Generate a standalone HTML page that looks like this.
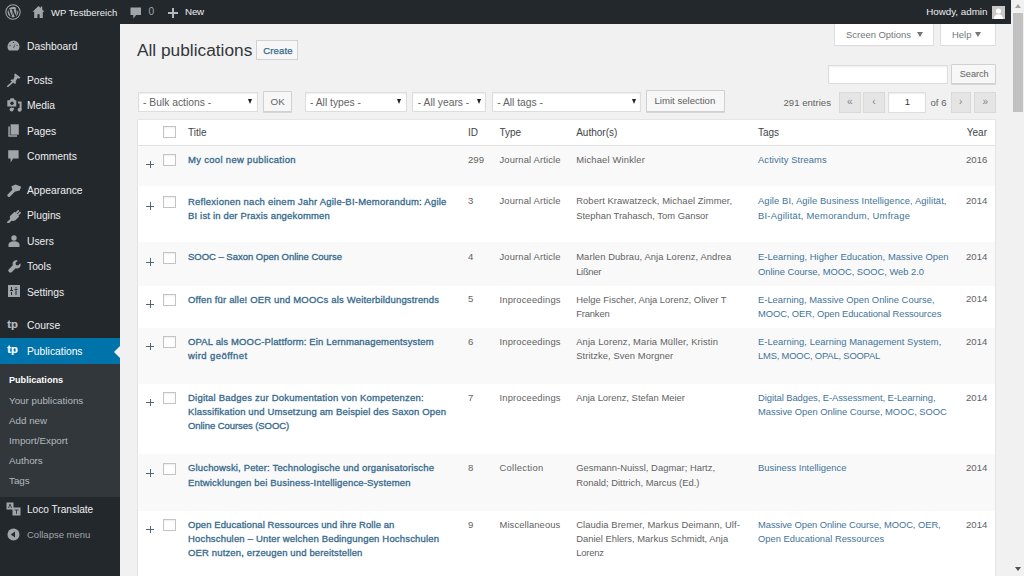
<!DOCTYPE html>
<html><head><meta charset="utf-8"><title>All publications</title>
<style>
html,body{margin:0;padding:0;width:1024px;height:576px;overflow:hidden;background:#f1f1f1}
body{position:relative;font-family:"Liberation Sans",sans-serif}
.r{position:absolute;display:block}
.t{position:absolute;white-space:nowrap}
</style></head><body>
<div class="r" style="left:0px;top:0px;width:1024px;height:576px;background:#f1f1f1"></div>
<div class="r" style="left:0px;top:24px;width:120px;height:552px;background:#23282d"></div>
<div class="r" style="left:0px;top:363.5px;width:120px;height:133px;background:#32373c"></div>
<div class="r" style="left:0px;top:337.5px;width:120px;height:26px;background:#0073aa"></div>
<div class="r" style="left:114px;top:346px;width:0;height:0;border-top:6px solid transparent;border-bottom:6px solid transparent;border-right:6px solid #f1f1f1"></div>
<div class="r" style="left:0px;top:0px;width:1011px;height:24px;background:#23282d"></div>
<div class="r" style="left:1012px;top:0px;width:12px;height:576px;background:#f1f1f1"></div>
<div class="r" style="left:1013px;top:13px;width:10px;height:99px;background:#c1c1c1"></div>
<div class="r" style="left:1015px;top:4px;width:0;height:0;border-left:3px solid transparent;border-right:3px solid transparent;border-bottom:4px solid #a3a3a3"></div>
<div class="r" style="left:1015px;top:567px;width:0;height:0;border-left:3px solid transparent;border-right:3px solid transparent;border-top:4px solid #505050"></div>
<svg class="r" style="left:4.5px;top:3.7px" width="16" height="16" viewBox="0 0 20 20"><circle cx="10" cy="10" r="9" fill="none" stroke="#a0a5aa" stroke-width="1.3"/><path d="M3.3 10a6.7 6.7 0 0 0 3.8 6L3.9 7.3A6.6 6.6 0 0 0 3.3 10zm11.1-.3c0-.8-.3-1.4-.5-1.8-.3-.5-.6-.9-.6-1.4 0-.6.4-1.1 1-1.1h.1A6.7 6.7 0 0 0 4.3 6.5h.4c.7 0 1.8-.1 1.8-.1.4 0 .4.5 0 .6 0 0-.4 0-.8.1l2.4 7.2 1.5-4.4-1-2.8c-.4 0-.7-.1-.7-.1-.4 0-.3-.6 0-.6 0 0 1.1.1 1.8.1s1.8-.1 1.8-.1c.4 0 .4.5 0 .6 0 0-.4 0-.8.1l2.4 7.1.7-2.2c.3-.9.5-1.6.5-2.1zm-4.3.9l-2 5.8a6.7 6.7 0 0 0 4.1-.1l-.1-.1-2-5.6zm5.7-3.8l.1.7c0 .7-.1 1.4-.5 2.4l-2 5.9a6.7 6.7 0 0 0 2.4-9z" fill="#a0a5aa"/></svg>
<svg class="r" style="left:32px;top:5px" width="13" height="14" viewBox="0 0 13 14"><path d="M6.5 1L0.5 6.8h1.7V13h3.2V9.2h2.2V13h3.2V6.8h1.7L10.2 4.4V1.6H8.8v1.5z" fill="#a0a5aa"/></svg>
<div class="t" style="left:51.00px;top:5.75px;font-size:9.5px;line-height:14.3px;color:#eee;">WP Testbereich</div>
<svg class="r" style="left:130px;top:7px" width="12" height="12" viewBox="0 0 12 12"><path d="M0.5 0.5h10.5v7.5H6.2L3.3 11.5V8H0.5z" fill="#a0a5aa"/></svg>
<div class="t" style="left:148.60px;top:5.31px;font-size:10.2px;line-height:14.3px;color:#a0a5aa;">0</div>
<div class="r" style="left:167.8px;top:11.6px;width:10.2px;height:2.2px;background:#b4b9be"></div>
<div class="r" style="left:171.8px;top:7.8px;width:2.2px;height:9.8px;background:#b4b9be"></div>
<div class="t" style="left:185.00px;top:5.45px;font-size:9.8px;line-height:14.3px;color:#eee;letter-spacing:-0.2px;">New</div>
<div class="t" style="right:36.50px;top:5.45px;font-size:9.8px;line-height:14.3px;color:#eee;text-align:right;">Howdy, admin</div>
<div class="r" style="left:992px;top:5.5px;width:13px;height:13px;background:#c7c7c7"></div>
<svg class="r" style="left:992px;top:5.5px" width="13" height="13" viewBox="0 0 13 13"><circle cx="6.5" cy="5" r="2.6" fill="#fff"/><path d="M1.8 13c0-3.2 2.2-4.8 4.7-4.8s4.7 1.6 4.7 4.8z" fill="#fff"/></svg>
<div class="t" style="left:27.00px;top:39.68px;font-size:10.3px;line-height:14.3px;color:#eee;">Dashboard</div>
<div class="t" style="left:27.00px;top:73.58px;font-size:10.3px;line-height:14.3px;color:#eee;">Posts</div>
<div class="t" style="left:27.00px;top:99.28px;font-size:10.3px;line-height:14.3px;color:#eee;">Media</div>
<div class="t" style="left:27.00px;top:124.88px;font-size:10.3px;line-height:14.3px;color:#eee;">Pages</div>
<div class="t" style="left:27.00px;top:150.48px;font-size:10.3px;line-height:14.3px;color:#eee;">Comments</div>
<div class="t" style="left:27.00px;top:183.58px;font-size:10.3px;line-height:14.3px;color:#eee;">Appearance</div>
<div class="t" style="left:27.00px;top:209.28px;font-size:10.3px;line-height:14.3px;color:#eee;">Plugins</div>
<div class="t" style="left:27.00px;top:234.88px;font-size:10.3px;line-height:14.3px;color:#eee;">Users</div>
<div class="t" style="left:27.00px;top:260.28px;font-size:10.3px;line-height:14.3px;color:#eee;">Tools</div>
<div class="t" style="left:27.00px;top:286.08px;font-size:10.3px;line-height:14.3px;color:#eee;">Settings</div>
<div class="t" style="left:27.00px;top:319.48px;font-size:10.3px;line-height:14.3px;color:#eee;">Course</div>
<div class="t" style="left:27.00px;top:344.78px;font-size:10.3px;line-height:14.3px;color:#fff;">Publications</div>
<div class="t" style="left:9.00px;top:373.09px;font-size:9.1px;line-height:14.3px;color:#fff;font-weight:bold;">Publications</div>
<div class="t" style="left:9.00px;top:393.75px;font-size:9.8px;line-height:14.3px;color:#b4b9be;">Your publications</div>
<div class="t" style="left:9.00px;top:413.95px;font-size:9.8px;line-height:14.3px;color:#b4b9be;">Add new</div>
<div class="t" style="left:9.00px;top:433.75px;font-size:9.8px;line-height:14.3px;color:#b4b9be;">Import/Export</div>
<div class="t" style="left:9.00px;top:454.25px;font-size:9.8px;line-height:14.3px;color:#b4b9be;">Authors</div>
<div class="t" style="left:9.00px;top:473.75px;font-size:9.8px;line-height:14.3px;color:#b4b9be;">Tags</div>
<div class="t" style="left:27.00px;top:502.55px;font-size:10.1px;line-height:14.3px;color:#eee;">Loco Translate</div>
<div class="t" style="left:27.00px;top:528.45px;font-size:9.5px;line-height:14.3px;color:#a0a5aa;">Collapse menu</div>
<svg class="r" style="left:7px;top:40px" width="13" height="11" viewBox="0 0 13 11"><path d="M6.5 0.5A6 6 0 0 0 0.5 6.5c0 1.6.6 3 1.6 4h8.8c1-1 1.6-2.4 1.6-4A6 6 0 0 0 6.5 0.5z" fill="#a0a5aa"/><path d="M6.2 7.5L8.5 3.2 7 7.8z" fill="#23282d"/><circle cx="3" cy="5.5" r=".6" fill="#23282d"/><circle cx="6.5" cy="2.5" r=".6" fill="#23282d"/><circle cx="10" cy="5.5" r=".6" fill="#23282d"/></svg>
<svg class="r" style="left:6.5px;top:72.5px" width="14" height="14" viewBox="0 0 14 14"><path d="M8.2 0.6L13.6 4.6 12.4 5.6 10.2 5.4 8.6 8.4 9 10.2 8 11 3.4 7.4 4.4 6.4 6.4 6.6 7.6 3.2 7.2 1.6z" fill="#a0a5aa"/><path d="M5.6 9.2L0.8 13.4" stroke="#a0a5aa" stroke-width="1.6" stroke-linecap="round"/></svg>
<svg class="r" style="left:6.5px;top:98px" width="15" height="14" viewBox="0 0 15 14"><path d="M0.3 2.2h2.2l1.2-1.9h3l1.2 1.9h1.4v6.4H0.3z" fill="#a0a5aa"/><circle cx="5" cy="5.3" r="1.7" fill="#23282d"/><path d="M11 3.6h3.6v8.2h-2V5.4H11z" fill="#a0a5aa"/><circle cx="4.6" cy="11.6" r="2" fill="#a0a5aa"/><circle cx="12.6" cy="11.8" r="2" fill="#a0a5aa"/><path d="M6.6 9.8V11.6" stroke="#a0a5aa" stroke-width="1"/></svg>
<svg class="r" style="left:7.5px;top:124px" width="11" height="13" viewBox="0 0 11 13"><path d="M2.6 0.3h8.2v10.4H2.6z" fill="#a0a5aa"/><path d="M0.3 2.4h1.5v8.9h7.3v1.5H0.3z" fill="#a0a5aa"/></svg>
<svg class="r" style="left:7.8px;top:149.6px" width="11" height="13" viewBox="0 0 11 13"><path d="M0.2 0.2h10.4v8.4H5.2L2.6 12.6V8.6H0.2z" fill="#a0a5aa"/></svg>
<svg class="r" style="left:6.5px;top:183.5px" width="15" height="13" viewBox="0 0 15 13"><path d="M4.5 2.2L8.6 0.4 14.2 2.8 12.6 6.6 8.4 7.6 5.2 5.6z" fill="#a0a5aa"/><path d="M7.2 6.2L2 11.4" stroke="#a0a5aa" stroke-width="3.2" stroke-linecap="round"/></svg>
<svg class="r" style="left:7px;top:208.5px" width="14" height="14" viewBox="0 0 14 14"><path d="M8.6 4.6L11.3 1.9M10.4 6.4L13.1 3.7" stroke="#a0a5aa" stroke-width="1.8" stroke-linecap="round"/><path d="M3.6 6.6L7.6 2.8 12.2 7.4 8.4 11.2C7 12.3 5 12.2 3.8 11 2.6 9.8 2.4 8 3.6 6.6z" fill="#a0a5aa"/><path d="M4.6 10.2L1.2 13.4" stroke="#a0a5aa" stroke-width="2.2" stroke-linecap="round"/></svg>
<svg class="r" style="left:8px;top:234.5px" width="12" height="12" viewBox="0 0 12 12"><circle cx="6" cy="3" r="2.7" fill="#a0a5aa"/><path d="M0.5 12v-2.5c0-2 2-3.3 5.5-3.3s5.5 1.3 5.5 3.3V12z" fill="#a0a5aa"/></svg>
<svg class="r" style="left:7.5px;top:259.5px" width="13" height="13" viewBox="0 0 13 13"><path d="M12.3 3.2L10 5.5 8 5 7.5 3 9.8.7C8.3 0 6.5.4 5.5 1.5 4.5 2.6 4.3 4 4.8 5.3L.7 9.4c-.6.6-.6 1.6 0 2.2l.7.7c.6.6 1.6.6 2.2 0l4.1-4.1c1.3.5 2.8.3 3.8-.7 1.1-1 1.5-2.7.8-4.3z" fill="#a0a5aa"/></svg>
<svg class="r" style="left:8px;top:285px" width="12" height="12" viewBox="0 0 12 12"><rect x="0" y="0" width="12" height="12" fill="#a0a5aa"/><path d="M3.5 2v3M3.5 7v3M8 2v1.5M8 5.5V10" stroke="#23282d" stroke-width="1"/><path d="M2 5.5h3M6.5 4.5h3" stroke="#23282d" stroke-width="1.2"/></svg>
<div class="t" style="left:7.30px;top:316.56px;font-size:11.2px;line-height:14.3px;color:#b8bcc0;font-weight:bold;letter-spacing:0px;-webkit-text-stroke:0.2px #b8bcc0;">tp</div>
<div class="t" style="left:7.30px;top:341.96px;font-size:11.2px;line-height:14.3px;color:#fff;font-weight:bold;letter-spacing:0px;-webkit-text-stroke:0.2px #fff;">tp</div>
<svg class="r" style="left:6px;top:502px" width="15" height="14" viewBox="0 0 15 14"><rect x="0.5" y="0.5" width="7" height="7" fill="#a0a5aa"/><rect x="6.5" y="5.5" width="8" height="8" fill="#a0a5aa"/><path d="M2.5 6l1.5-4 1.5 4M8.5 8h4M10.5 8v4" stroke="#23282d" stroke-width=".8" fill="none"/></svg>
<svg class="r" style="left:7px;top:528px" width="13" height="13" viewBox="0 0 13 13"><circle cx="6.5" cy="6.5" r="6" fill="#a0a5aa"/><path d="M8 3.5v6L3.8 6.5z" fill="#23282d"/></svg>
<div class="t" style="left:137.00px;top:40.40px;font-size:17.3px;line-height:20px;color:#32373c;">All publications</div>
<div class="r" style="left:256px;top:40px;width:41.5px;height:19.5px;background:#f7f7f7;border:1px solid #d2d2d2;box-sizing:border-box"></div>
<div class="t" style="left:263.20px;top:43.95px;font-size:9.5px;line-height:14.3px;color:#35698c;-webkit-text-stroke:0.25px #35698c;letter-spacing:0.15px;">Create</div>
<div class="r" style="left:833.5px;top:24px;width:100.5px;height:21.5px;background:#fff;border:1px solid #ddd;border-top:none;box-shadow:0 1px 1px -1px rgba(0,0,0,.1);box-sizing:border-box"></div>
<div class="t" style="left:846.00px;top:27.57px;font-size:9.45px;line-height:14.3px;color:#72777c;">Screen Options</div>
<div class="r" style="left:917px;top:31.5px;width:0;height:0;border-left:3px solid transparent;border-right:3px solid transparent;border-top:5px solid #72777c"></div>
<div class="r" style="left:939.5px;top:24px;width:56.8px;height:21.5px;background:#fff;border:1px solid #ddd;border-top:none;box-sizing:border-box"></div>
<div class="t" style="left:952.00px;top:27.57px;font-size:9.45px;line-height:14.3px;color:#72777c;">Help</div>
<div class="r" style="left:975px;top:31.5px;width:0;height:0;border-left:3px solid transparent;border-right:3px solid transparent;border-top:5px solid #72777c"></div>
<div class="r" style="left:827.5px;top:64.5px;width:120px;height:19px;background:#fff;border:1px solid #ddd;box-shadow:inset 0 1px 2px rgba(0,0,0,.07);box-sizing:border-box"></div>
<div class="r" style="left:951px;top:63.5px;width:45.2px;height:20.8px;background:#f7f7f7;border:1px solid #d0d0d0;border-radius:1px;box-shadow:0 1px 0 #d6d6d6;box-sizing:border-box"></div>
<div class="t" style="left:959.80px;top:66.99px;font-size:9.1px;line-height:14.3px;color:#626262;">Search</div>
<div class="r" style="left:137.5px;top:91.5px;width:120px;height:20px;background:#fff;border:1px solid #ddd;box-shadow:inset 0 1px 2px rgba(0,0,0,.07);box-sizing:border-box"></div>
<div class="t" style="left:143.00px;top:95.58px;font-size:10.3px;line-height:14.3px;color:#626262;">- Bulk actions -</div>
<div class="r" style="left:248.0px;top:98.5px;width:0;height:0;border-left:2.6px solid transparent;border-right:2.6px solid transparent;border-top:5px solid #222"></div>
<div class="r" style="left:262.5px;top:91px;width:29.5px;height:20.5px;background:#f7f7f7;border:1px solid #d0d0d0;border-radius:1px;box-shadow:0 1px 0 #d6d6d6;box-sizing:border-box"></div>
<div class="t" style="left:270.60px;top:95.01px;font-size:9.9px;line-height:14.3px;color:#626262;">OK</div>
<div class="r" style="left:304.5px;top:91.5px;width:102px;height:20px;background:#fff;border:1px solid #ddd;box-shadow:inset 0 1px 2px rgba(0,0,0,.07);box-sizing:border-box"></div>
<div class="t" style="left:310.00px;top:95.58px;font-size:10.3px;line-height:14.3px;color:#626262;">- All types -</div>
<div class="r" style="left:397.0px;top:98.5px;width:0;height:0;border-left:2.6px solid transparent;border-right:2.6px solid transparent;border-top:5px solid #222"></div>
<div class="r" style="left:412.3px;top:91.5px;width:74px;height:20px;background:#fff;border:1px solid #ddd;box-shadow:inset 0 1px 2px rgba(0,0,0,.07);box-sizing:border-box"></div>
<div class="t" style="left:417.80px;top:95.58px;font-size:10.3px;line-height:14.3px;color:#626262;">- All years -</div>
<div class="r" style="left:476.8px;top:98.5px;width:0;height:0;border-left:2.6px solid transparent;border-right:2.6px solid transparent;border-top:5px solid #222"></div>
<div class="r" style="left:491.7px;top:91.5px;width:149.5px;height:20px;background:#fff;border:1px solid #ddd;box-shadow:inset 0 1px 2px rgba(0,0,0,.07);box-sizing:border-box"></div>
<div class="t" style="left:497.20px;top:95.58px;font-size:10.3px;line-height:14.3px;color:#626262;">- All tags -</div>
<div class="r" style="left:631.7px;top:98.5px;width:0;height:0;border-left:2.6px solid transparent;border-right:2.6px solid transparent;border-top:5px solid #222"></div>
<div class="r" style="left:646.4px;top:90px;width:78.2px;height:21.5px;background:#f7f7f7;border:1px solid #d0d0d0;border-radius:1px;box-shadow:0 1px 0 #d6d6d6;box-sizing:border-box"></div>
<div class="t" style="left:654.50px;top:93.82px;font-size:9.6px;line-height:14.3px;color:#626262;">Limit selection</div>
<div class="t" style="right:193.00px;top:95.52px;font-size:9.6px;line-height:14.3px;color:#626262;text-align:right;">291 entries</div>
<div class="r" style="left:839px;top:92px;width:21.7px;height:20.5px;background:#e5e5e5;border:1px solid #d9d9d9;box-sizing:border-box"></div>
<div class="t" style="left:839px;top:94.5px;width:21.7px;text-align:center;font-size:10px;line-height:14px;color:#7d8286">&laquo;</div>
<div class="r" style="left:863px;top:92px;width:21.8px;height:20.5px;background:#e5e5e5;border:1px solid #d9d9d9;box-sizing:border-box"></div>
<div class="t" style="left:863px;top:94.5px;width:21.8px;text-align:center;font-size:10px;line-height:14px;color:#7d8286">&lsaquo;</div>
<div class="r" style="left:888.3px;top:92px;width:38.2px;height:20.5px;background:#fff;border:1px solid #ddd;box-shadow:inset 0 1px 2px rgba(0,0,0,.07);box-sizing:border-box"></div>
<div class="t" style="left:888.3px;top:95.3px;width:38.2px;text-align:center;font-size:9.6px;line-height:14px;color:#32373c">1</div>
<div class="t" style="left:930.50px;top:95.52px;font-size:9.6px;line-height:14.3px;color:#626262;">of 6</div>
<div class="r" style="left:950.5px;top:92px;width:20.5px;height:20.5px;background:#e5e5e5;border:1px solid #d9d9d9;box-sizing:border-box"></div>
<div class="t" style="left:950.5px;top:94.5px;width:20.5px;text-align:center;font-size:10px;line-height:14px;color:#7d8286">&rsaquo;</div>
<div class="r" style="left:974.4px;top:92px;width:21.8px;height:20.5px;background:#e5e5e5;border:1px solid #d9d9d9;box-sizing:border-box"></div>
<div class="t" style="left:974.4px;top:94.5px;width:21.8px;text-align:center;font-size:10px;line-height:14px;color:#7d8286">&raquo;</div>
<div class="r" style="left:137px;top:118.5px;width:858.5px;height:460px;background:#fff;border:1px solid #e5e5e5;box-shadow:0 1px 1px rgba(0,0,0,.04);box-sizing:border-box"></div>
<div class="r" style="left:138px;top:145px;width:856.5px;height:1px;background:#e1e1e1"></div>
<div class="r" style="left:163.3px;top:125.8px;width:12.3px;height:12.3px;background:#fff;border:1px solid #c2c4c6;box-shadow:inset 0 1px 2px rgba(0,0,0,.07);box-sizing:border-box"></div>
<div class="t" style="left:188.00px;top:126.38px;font-size:10.0px;line-height:14.3px;color:#40454a;">Title</div>
<div class="t" style="left:468.00px;top:126.38px;font-size:10.0px;line-height:14.3px;color:#40454a;">ID</div>
<div class="t" style="left:499.50px;top:126.38px;font-size:10.0px;line-height:14.3px;color:#40454a;">Type</div>
<div class="t" style="left:576.20px;top:126.38px;font-size:10.0px;line-height:14.3px;color:#40454a;">Author(s)</div>
<div class="t" style="left:758.00px;top:126.38px;font-size:10.0px;line-height:14.3px;color:#40454a;">Tags</div>
<div class="t" style="right:37.00px;top:126.38px;font-size:10.0px;line-height:14.3px;color:#40454a;text-align:right;">Year</div>
<div class="r" style="left:138px;top:146px;width:856.5px;height:40px;background:#f9f9f9"></div>
<div class="r" style="left:163.3px;top:154.0px;width:12.3px;height:12.3px;background:#fff;border:1px solid #c2c4c6;box-shadow:inset 0 1px 2px rgba(0,0,0,.07);box-sizing:border-box"></div>
<div class="r" style="left:146px;top:164px;width:7.8px;height:1px;background:#4d6873"></div>
<div class="r" style="left:149.5px;top:160.5px;width:1px;height:7.8px;background:#4d6873"></div>
<div class="t" style="left:188.00px;top:152.60px;font-size:9.5px;line-height:14.2px;color:#35698c;-webkit-text-stroke:0.3px #35698c;letter-spacing:0.307px;">My cool new publication</div>
<div class="t" style="left:468.00px;top:152.57px;font-size:9.6px;line-height:14.2px;color:#626262;">299</div>
<div class="t" style="left:499.50px;top:152.64px;font-size:9.4px;line-height:14.2px;color:#626262;letter-spacing:0.148px;">Journal Article</div>
<div class="t" style="left:576.20px;top:152.64px;font-size:9.4px;line-height:14.2px;color:#626262;letter-spacing:0.177px;">Michael Winkler</div>
<div class="t" style="left:758.00px;top:152.64px;font-size:9.4px;line-height:14.2px;color:#3f7499;letter-spacing:0.093px;">Activity Streams</div>
<div class="t" style="right:36.70px;top:152.57px;font-size:9.6px;line-height:14.2px;color:#626262;text-align:right;">2016</div>
<div class="r" style="left:163.3px;top:195.8px;width:12.3px;height:12.3px;background:#fff;border:1px solid #c2c4c6;box-shadow:inset 0 1px 2px rgba(0,0,0,.07);box-sizing:border-box"></div>
<div class="r" style="left:146px;top:205.8px;width:7.8px;height:1px;background:#4d6873"></div>
<div class="r" style="left:149.5px;top:202.3px;width:1px;height:7.8px;background:#4d6873"></div>
<div class="t" style="left:188.00px;top:195.00px;font-size:9.5px;line-height:14.2px;color:#35698c;-webkit-text-stroke:0.3px #35698c;letter-spacing:0.232px;">Reflexionen nach einem Jahr Agile-BI-Memorandum: Agile</div>
<div class="t" style="left:188.00px;top:209.20px;font-size:9.5px;line-height:14.2px;color:#35698c;-webkit-text-stroke:0.3px #35698c;letter-spacing:0.168px;">BI ist in der Praxis angekommen</div>
<div class="t" style="left:468.00px;top:194.37px;font-size:9.6px;line-height:14.2px;color:#626262;">3</div>
<div class="t" style="left:499.50px;top:194.44px;font-size:9.4px;line-height:14.2px;color:#626262;letter-spacing:0.148px;">Journal Article</div>
<div class="t" style="left:576.20px;top:194.44px;font-size:9.4px;line-height:14.2px;color:#626262;letter-spacing:0.085px;">Robert Krawatzeck, Michael Zimmer,</div>
<div class="t" style="left:576.20px;top:208.64px;font-size:9.4px;line-height:14.2px;color:#626262;letter-spacing:0.002px;">Stephan Trahasch, Tom Gansor</div>
<div class="t" style="left:758.00px;top:194.44px;font-size:9.4px;line-height:14.2px;color:#3f7499;letter-spacing:0.096px;">Agile BI, Agile Business Intelligence, Agilit&auml;t,</div>
<div class="t" style="left:758.00px;top:208.64px;font-size:9.4px;line-height:14.2px;color:#3f7499;letter-spacing:0.248px;">BI-Agilit&auml;t, Memorandum, Umfrage</div>
<div class="t" style="right:36.70px;top:194.37px;font-size:9.6px;line-height:14.2px;color:#626262;text-align:right;">2014</div>
<div class="r" style="left:138px;top:242px;width:856.5px;height:43.5px;background:#f9f9f9"></div>
<div class="r" style="left:163.3px;top:251.8px;width:12.3px;height:12.3px;background:#fff;border:1px solid #c2c4c6;box-shadow:inset 0 1px 2px rgba(0,0,0,.07);box-sizing:border-box"></div>
<div class="r" style="left:146px;top:261.8px;width:7.8px;height:1px;background:#4d6873"></div>
<div class="r" style="left:149.5px;top:258.3px;width:1px;height:7.8px;background:#4d6873"></div>
<div class="t" style="left:188.00px;top:250.40px;font-size:9.5px;line-height:14.2px;color:#35698c;-webkit-text-stroke:0.3px #35698c;letter-spacing:-0.024px;">SOOC &ndash; Saxon Open Online Course</div>
<div class="t" style="left:468.00px;top:250.37px;font-size:9.6px;line-height:14.2px;color:#626262;">4</div>
<div class="t" style="left:499.50px;top:250.44px;font-size:9.4px;line-height:14.2px;color:#626262;letter-spacing:0.148px;">Journal Article</div>
<div class="t" style="left:576.20px;top:250.44px;font-size:9.4px;line-height:14.2px;color:#626262;letter-spacing:0.100px;">Marlen Dubrau, Anja Lorenz, Andrea</div>
<div class="t" style="left:576.20px;top:264.64px;font-size:9.4px;line-height:14.2px;color:#626262;letter-spacing:-0.290px;">Li&szlig;ner</div>
<div class="t" style="left:758.00px;top:250.44px;font-size:9.4px;line-height:14.2px;color:#3f7499;letter-spacing:0.058px;">E-Learning, Higher Education, Massive Open</div>
<div class="t" style="left:758.00px;top:264.64px;font-size:9.4px;line-height:14.2px;color:#3f7499;letter-spacing:-0.034px;">Online Course, MOOC, SOOC, Web 2.0</div>
<div class="t" style="right:36.70px;top:250.37px;font-size:9.6px;line-height:14.2px;color:#626262;text-align:right;">2014</div>
<div class="r" style="left:163.3px;top:293.9px;width:12.3px;height:12.3px;background:#fff;border:1px solid #c2c4c6;box-shadow:inset 0 1px 2px rgba(0,0,0,.07);box-sizing:border-box"></div>
<div class="r" style="left:146px;top:303.9px;width:7.8px;height:1px;background:#4d6873"></div>
<div class="r" style="left:149.5px;top:300.4px;width:1px;height:7.8px;background:#4d6873"></div>
<div class="t" style="left:188.00px;top:292.50px;font-size:9.5px;line-height:14.2px;color:#35698c;-webkit-text-stroke:0.3px #35698c;letter-spacing:0.170px;">Offen f&uuml;r alle! OER und MOOCs als Weiterbildungstrends</div>
<div class="t" style="left:468.00px;top:292.47px;font-size:9.6px;line-height:14.2px;color:#626262;">5</div>
<div class="t" style="left:499.50px;top:292.54px;font-size:9.4px;line-height:14.2px;color:#626262;letter-spacing:0.172px;">Inproceedings</div>
<div class="t" style="left:576.20px;top:292.54px;font-size:9.4px;line-height:14.2px;color:#626262;letter-spacing:0.014px;">Helge Fischer, Anja Lorenz, Oliver T</div>
<div class="t" style="left:576.20px;top:306.74px;font-size:9.4px;line-height:14.2px;color:#626262;letter-spacing:-0.150px;">Franken</div>
<div class="t" style="left:758.00px;top:292.54px;font-size:9.4px;line-height:14.2px;color:#3f7499;letter-spacing:0.010px;">E-Learning, Massive Open Online Course,</div>
<div class="t" style="left:758.00px;top:306.74px;font-size:9.4px;line-height:14.2px;color:#3f7499;letter-spacing:-0.087px;">MOOC, OER, Open Educational Ressources</div>
<div class="t" style="right:36.70px;top:292.47px;font-size:9.6px;line-height:14.2px;color:#626262;text-align:right;">2014</div>
<div class="r" style="left:138px;top:327.5px;width:856.5px;height:56.5px;background:#f9f9f9"></div>
<div class="r" style="left:163.3px;top:336.0px;width:12.3px;height:12.3px;background:#fff;border:1px solid #c2c4c6;box-shadow:inset 0 1px 2px rgba(0,0,0,.07);box-sizing:border-box"></div>
<div class="r" style="left:146px;top:346px;width:7.8px;height:1px;background:#4d6873"></div>
<div class="r" style="left:149.5px;top:342.5px;width:1px;height:7.8px;background:#4d6873"></div>
<div class="t" style="left:188.00px;top:334.60px;font-size:9.5px;line-height:14.2px;color:#35698c;-webkit-text-stroke:0.3px #35698c;letter-spacing:0.145px;">OPAL als MOOC-Plattform: Ein Lernmanagementsystem</div>
<div class="t" style="left:188.00px;top:348.80px;font-size:9.5px;line-height:14.2px;color:#35698c;-webkit-text-stroke:0.3px #35698c;letter-spacing:0.409px;">wird ge&ouml;ffnet</div>
<div class="t" style="left:468.00px;top:334.57px;font-size:9.6px;line-height:14.2px;color:#626262;">6</div>
<div class="t" style="left:499.50px;top:334.64px;font-size:9.4px;line-height:14.2px;color:#626262;letter-spacing:0.172px;">Inproceedings</div>
<div class="t" style="left:576.20px;top:334.64px;font-size:9.4px;line-height:14.2px;color:#626262;letter-spacing:0.129px;">Anja Lorenz, Maria M&uuml;ller, Kristin</div>
<div class="t" style="left:576.20px;top:348.84px;font-size:9.4px;line-height:14.2px;color:#626262;letter-spacing:0.076px;">Stritzke, Sven Morgner</div>
<div class="t" style="left:758.00px;top:334.64px;font-size:9.4px;line-height:14.2px;color:#3f7499;letter-spacing:0.051px;">E-Learning, Learning Management System,</div>
<div class="t" style="left:758.00px;top:348.84px;font-size:9.4px;line-height:14.2px;color:#3f7499;letter-spacing:-0.181px;">LMS, MOOC, OPAL, SOOPAL</div>
<div class="t" style="right:36.70px;top:334.57px;font-size:9.6px;line-height:14.2px;color:#626262;text-align:right;">2014</div>
<div class="r" style="left:163.3px;top:392.0px;width:12.3px;height:12.3px;background:#fff;border:1px solid #c2c4c6;box-shadow:inset 0 1px 2px rgba(0,0,0,.07);box-sizing:border-box"></div>
<div class="r" style="left:146px;top:402px;width:7.8px;height:1px;background:#4d6873"></div>
<div class="r" style="left:149.5px;top:398.5px;width:1px;height:7.8px;background:#4d6873"></div>
<div class="t" style="left:188.00px;top:390.60px;font-size:9.5px;line-height:14.2px;color:#35698c;-webkit-text-stroke:0.3px #35698c;letter-spacing:0.211px;">Digital Badges zur Dokumentation von Kompetenzen:</div>
<div class="t" style="left:188.00px;top:404.80px;font-size:9.5px;line-height:14.2px;color:#35698c;-webkit-text-stroke:0.3px #35698c;letter-spacing:0.152px;">Klassifikation und Umsetzung am Beispiel des Saxon Open</div>
<div class="t" style="left:188.00px;top:419.00px;font-size:9.5px;line-height:14.2px;color:#35698c;-webkit-text-stroke:0.3px #35698c;letter-spacing:-0.060px;">Online Courses (SOOC)</div>
<div class="t" style="left:468.00px;top:390.57px;font-size:9.6px;line-height:14.2px;color:#626262;">7</div>
<div class="t" style="left:499.50px;top:390.64px;font-size:9.4px;line-height:14.2px;color:#626262;letter-spacing:0.172px;">Inproceedings</div>
<div class="t" style="left:576.20px;top:390.64px;font-size:9.4px;line-height:14.2px;color:#626262;letter-spacing:0.014px;">Anja Lorenz, Stefan Meier</div>
<div class="t" style="left:758.00px;top:390.64px;font-size:9.4px;line-height:14.2px;color:#3f7499;letter-spacing:-0.056px;">Digital Badges, E-Assessment, E-Learning,</div>
<div class="t" style="left:758.00px;top:404.84px;font-size:9.4px;line-height:14.2px;color:#3f7499;letter-spacing:-0.021px;">Massive Open Online Course, MOOC, SOOC</div>
<div class="t" style="right:36.70px;top:390.57px;font-size:9.6px;line-height:14.2px;color:#626262;text-align:right;">2014</div>
<div class="r" style="left:138px;top:454px;width:856.5px;height:56.5px;background:#f9f9f9"></div>
<div class="r" style="left:163.3px;top:462.8px;width:12.3px;height:12.3px;background:#fff;border:1px solid #c2c4c6;box-shadow:inset 0 1px 2px rgba(0,0,0,.07);box-sizing:border-box"></div>
<div class="r" style="left:146px;top:472.8px;width:7.8px;height:1px;background:#4d6873"></div>
<div class="r" style="left:149.5px;top:469.3px;width:1px;height:7.8px;background:#4d6873"></div>
<div class="t" style="left:188.00px;top:461.40px;font-size:9.5px;line-height:14.2px;color:#35698c;-webkit-text-stroke:0.3px #35698c;letter-spacing:0.151px;">Gluchowski, Peter: Technologische und organisatorische</div>
<div class="t" style="left:188.00px;top:475.60px;font-size:9.5px;line-height:14.2px;color:#35698c;-webkit-text-stroke:0.3px #35698c;letter-spacing:0.174px;">Entwicklungen bei Business-Intelligence-Systemen</div>
<div class="t" style="left:468.00px;top:461.37px;font-size:9.6px;line-height:14.2px;color:#626262;">8</div>
<div class="t" style="left:499.50px;top:461.44px;font-size:9.4px;line-height:14.2px;color:#626262;letter-spacing:0.270px;">Collection</div>
<div class="t" style="left:576.20px;top:461.44px;font-size:9.4px;line-height:14.2px;color:#626262;letter-spacing:0.027px;">Gesmann-Nuissl, Dagmar; Hartz,</div>
<div class="t" style="left:576.20px;top:475.64px;font-size:9.4px;line-height:14.2px;color:#626262;letter-spacing:0.011px;">Ronald; Dittrich, Marcus (Ed.)</div>
<div class="t" style="left:758.00px;top:461.44px;font-size:9.4px;line-height:14.2px;color:#3f7499;letter-spacing:0.014px;">Business Intelligence</div>
<div class="t" style="right:36.70px;top:461.37px;font-size:9.6px;line-height:14.2px;color:#626262;text-align:right;">2014</div>
<div class="r" style="left:163.3px;top:519.0px;width:12.3px;height:12.3px;background:#fff;border:1px solid #c2c4c6;box-shadow:inset 0 1px 2px rgba(0,0,0,.07);box-sizing:border-box"></div>
<div class="r" style="left:146px;top:529px;width:7.8px;height:1px;background:#4d6873"></div>
<div class="r" style="left:149.5px;top:525.5px;width:1px;height:7.8px;background:#4d6873"></div>
<div class="t" style="left:188.00px;top:517.60px;font-size:9.5px;line-height:14.2px;color:#35698c;-webkit-text-stroke:0.3px #35698c;letter-spacing:0.082px;">Open Educational Ressources und ihre Rolle an</div>
<div class="t" style="left:188.00px;top:531.80px;font-size:9.5px;line-height:14.2px;color:#35698c;-webkit-text-stroke:0.3px #35698c;letter-spacing:0.172px;">Hochschulen &ndash; Unter welchen Bedingungen Hochschulen</div>
<div class="t" style="left:188.00px;top:546.00px;font-size:9.5px;line-height:14.2px;color:#35698c;-webkit-text-stroke:0.3px #35698c;letter-spacing:0.146px;">OER nutzen, erzeugen und bereitstellen</div>
<div class="t" style="left:468.00px;top:517.57px;font-size:9.6px;line-height:14.2px;color:#626262;">9</div>
<div class="t" style="left:499.50px;top:517.64px;font-size:9.4px;line-height:14.2px;color:#626262;letter-spacing:0.113px;">Miscellaneous</div>
<div class="t" style="left:576.20px;top:517.64px;font-size:9.4px;line-height:14.2px;color:#626262;letter-spacing:0.089px;">Claudia Bremer, Markus Deimann, Ulf-</div>
<div class="t" style="left:576.20px;top:531.84px;font-size:9.4px;line-height:14.2px;color:#626262;letter-spacing:0.009px;">Daniel Ehlers, Markus Schmidt, Anja</div>
<div class="t" style="left:576.20px;top:546.04px;font-size:9.4px;line-height:14.2px;color:#626262;letter-spacing:-0.193px;">Lorenz</div>
<div class="t" style="left:758.00px;top:517.64px;font-size:9.4px;line-height:14.2px;color:#3f7499;letter-spacing:-0.061px;">Massive Open Online Course, MOOC, OER,</div>
<div class="t" style="left:758.00px;top:531.84px;font-size:9.4px;line-height:14.2px;color:#3f7499;letter-spacing:-0.015px;">Open Educational Ressources</div>
<div class="t" style="right:36.70px;top:517.57px;font-size:9.6px;line-height:14.2px;color:#626262;text-align:right;">2014</div>
</body></html>
